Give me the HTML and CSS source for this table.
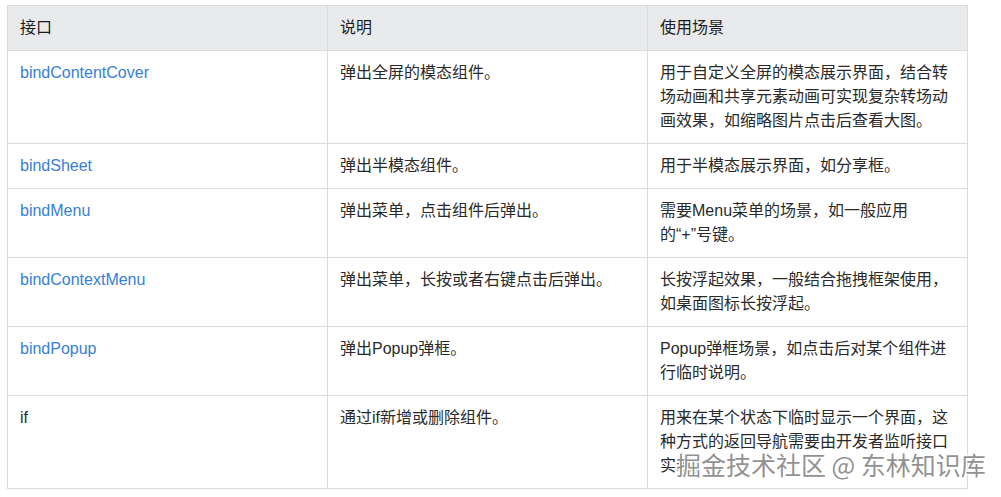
FILE: index.html
```html
<!DOCTYPE html>
<html lang="zh-CN">
<head>
<meta charset="utf-8">
<link rel="stylesheet" href="styles.css">
</head>
<body>
<div class="page">
  <table class="api-table">
    <colgroup><col class="col"><col class="col"><col class="col"></colgroup>
    <thead>
      <tr><th>接口</th><th>说明</th><th>使用场景</th></tr>
    </thead>
    <tbody>
      <tr>
        <td><a class="link">bindContentCover</a></td>
        <td>弹出全屏的模态组件。</td>
        <td>用于自定义全屏的模态展示界面，结合转场动画和共享元素动画可实现复杂转场动画效果，如缩略图片点击后查看大图。</td>
      </tr>
      <tr>
        <td><a class="link">bindSheet</a></td>
        <td>弹出半模态组件。</td>
        <td>用于半模态展示界面，如分享框。</td>
      </tr>
      <tr>
        <td><a class="link">bindMenu</a></td>
        <td>弹出菜单，点击组件后弹出。</td>
        <td>需要Menu菜单的场景，如一般应用<span class="keep">的“+”号键。</span></td>
      </tr>
      <tr>
        <td><a class="link">bindContextMenu</a></td>
        <td>弹出菜单，长按或者右键点击后弹出。</td>
        <td>长按浮起效果，一般结合拖拽框架使用，如桌面图标长按浮起。</td>
      </tr>
      <tr>
        <td><a class="link">bindPopup</a></td>
        <td>弹出Popup弹框。</td>
        <td>Popup弹框场景，如点击后对某个组件进行临时说明。</td>
      </tr>
      <tr>
        <td>if</td>
        <td>通过if新增或删除组件。</td>
        <td>用来在某个状态下临时显示一个界面，这种方式的返回导航需要由开发者监听接口实现。</td>
      </tr>
    </tbody>
  </table>
  <div class="watermark">掘金技术社区 @ 东林知识库</div>
</div>
</body>
</html>
```

FILE: styles.css
```css
html, body {
  margin: 0;
  padding: 0;
  background: #ffffff;
}

body {
  font-family: "Liberation Sans", "Noto Sans CJK SC", sans-serif;
  font-size: 16px;
  line-height: 24px;
  color: #2a2a2a;
}

.page {
  position: relative;
  padding: 5px 0 0 7px;
  width: 1001px;
  height: 497px;
  box-sizing: border-box;
}

.api-table {
  border-collapse: collapse;
  table-layout: fixed;
  width: 960px;
}

.col {
  width: 320px;
}

.api-table th,
.api-table td {
  border: 1px solid #dadada;
  padding: 10px 12px;
  text-align: left;
  vertical-align: top;
  font-weight: normal;
}

.api-table th {
  background: #e9eaec;
  color: #1c1c1c;
}

.keep {
  white-space: nowrap;
}

.link {
  color: #3680dc;
  text-decoration: none;
}

.watermark {
  position: absolute;
  left: 676px;
  top: 447px;
  font-family: "Noto Sans CJK SC", sans-serif;
  font-size: 25px;
  line-height: 34px;
  color: rgba(125, 125, 125, 0.85);
  text-shadow: 1px 1px 0 #ffffff, -1px -1px 0 #ffffff, 1px -1px 0 #ffffff, -1px 1px 0 #ffffff, 0 0 3px #ffffff;
  white-space: nowrap;
}
```
